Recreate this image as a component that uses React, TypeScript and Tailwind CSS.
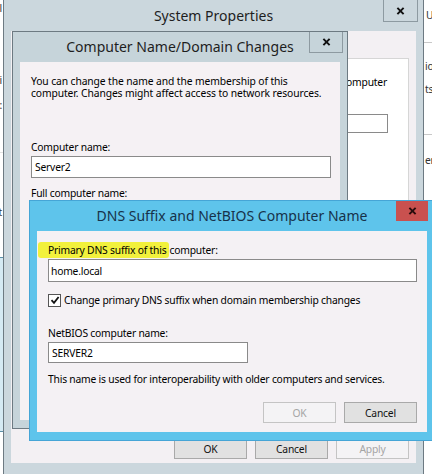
import React from 'react';

function CloseX() {
  return (
    <svg viewBox="0 0 10 9" className="h-[8px] w-[9px]">
      <path d="M1.5 1 L8.5 8 M8.5 1 L1.5 8" stroke="currentColor" strokeWidth="2.2" />
    </svg>
  );
}

function Button({ label, disabled }: { label: string; disabled?: boolean }) {
  return (
    <div
      className={
        disabled
          ? 'flex h-[21px] w-[73px] items-center justify-center border border-[#c4c4c4] bg-[#f4f3f5] text-[#a5a5a5]'
          : 'flex h-[21px] w-[73px] items-center justify-center border border-[#a9a9a9] bg-[#e1e1e1] text-[#111]'
      }
    >
      {label}
    </div>
  );
}

export default function App() {
  return (
    <div className="relative h-[474px] w-[432px] overflow-hidden bg-white font-[family-name:'Noto_Sans',sans-serif] text-[10.3px] leading-[14px] tracking-[-0.2px] text-black">
      {/* window behind, left edge */}
      <div className="absolute left-[-200px] top-[-1px] flex h-[480px] w-[204px] flex-col items-end border-r border-[#7b868c] bg-white text-[#333]">
        <div className="mt-[2px] pr-[1px]">Unl</div>
        <div className="mt-[58px] pr-[1px]">Edi</div>
        <div className="mt-[11px] pr-[1px]">Na:</div>
        <div className="mt-[40px] h-px w-full bg-[#e2e2e2]" />
        <div className="mt-[52px] pr-[1px]">Set</div>
        <div className="mt-[38px] h-[175px] w-full border-y border-[#5b8fa8] bg-[#d5eaf3]" />
      </div>

      {/* window behind, right edge */}
      <div className="absolute left-[424px] top-[-1px] flex h-[480px] w-[200px] flex-col bg-white text-[#333]">
        <div className="mt-[9px] pl-[2px]">User</div>
        <div className="mt-[20px] h-px w-full bg-[#c9c9c9]" />
        <div className="mt-[16px] pl-[1px]">ion</div>
        <div className="mt-[9px] pl-[1px]">ts</div>
        <div className="mt-[38px] h-px w-full bg-[#c9c9c9]" />
        <div className="mt-[18px] pl-[1px]">en</div>
      </div>

      {/* System Properties */}
      <div className="absolute left-[3px] top-[-1px] h-[480px] w-[421px] border border-[#6d7a82] bg-[#cbd7dd]">
        <div className="relative flex h-[31px] items-center justify-center text-[14px] tracking-normal text-[#1e1e1e]">
          System Properties
          <div className="absolute right-[5px] top-0 flex h-[22px] w-[35px] items-center justify-center border border-t-0 border-[#8d9aa1] text-[#111]">
            <CloseX />
          </div>
        </div>
        <div className="mx-[7px] flex h-[432px] flex-col bg-[#f3f0f3]">
          <div className="ml-[7px] mr-[7px] mt-[27px] flex h-[370px] flex-col border border-[#d6d6d6] bg-white">
            <div className="flex justify-end whitespace-nowrap pr-[21px] pt-[16px]">
              Windows uses the following information to identify your computer
            </div>
            <div className="pl-[12px]">on the network.</div>
            <div className="mt-[11px] flex justify-end pr-[20px]">
              <div className="h-[19px] w-[220px] border border-[#8a8a8a] bg-white" />
            </div>
          </div>
          <div className="mt-[10px] flex justify-end gap-[8px] pr-[7px]">
            <Button label="OK" />
            <Button label="Cancel" />
            <Button label="Apply" disabled />
          </div>
        </div>
      </div>

      {/* Computer Name/Domain Changes */}
      <div className="absolute left-[12px] top-[31px] h-[398px] w-[336px] border border-[#6d7a82] bg-[#c6d4da]">
        <div className="relative flex h-[30px] items-center justify-center text-[14px] tracking-normal text-[#1e1e1e]">
          Computer Name/Domain Changes
          <div className="absolute right-[4px] top-0 flex h-[21px] w-[34px] items-center justify-center border border-t-0 border-[#8d9aa1] text-[#111]">
            <CloseX />
          </div>
        </div>
        <div className="mx-[7px] flex h-[358px] flex-col bg-[#f5f1f4] pl-[11px] pt-[13px]">
          <p className="leading-[12px] tracking-[-0.1px]">
            You can change the name and the membership of this
            <br />
            computer. Changes might affect access to network resources.
          </p>
          <div className="mt-[41px]">Computer name:</div>
          <div className="mt-[2px] flex h-[22px] w-[300px] items-center border border-[#8a8a8a] bg-white pl-[3px]">
            Server2
          </div>
          <div className="mt-[8px]">Full computer name:</div>
        </div>
      </div>

      {/* DNS Suffix and NetBIOS Computer Name */}
      <div className="absolute left-[29px] top-[200px] h-[241px] w-[406px] border border-[#45a5d6] bg-[#5ec4eb]">
        <div className="relative flex h-[30px] items-center justify-center text-[14px] tracking-normal text-[#17324a]">
          DNS Suffix and NetBIOS Computer Name
          <div className="absolute right-[6px] top-0 flex h-[20px] w-[32px] items-center justify-center bg-[#c9514f] text-[#2a0d0d]">
            <CloseX />
          </div>
        </div>
        <div className="mx-[7px] flex h-[201px] flex-col bg-[#f4f1f4] pl-[11px] pr-[10px] pt-[12px]">
          <div className="whitespace-nowrap">
            <span className="-ml-[10px] rounded-[3px] bg-[#f2f13c] py-[1px] pl-[10px] pr-[3px]">
              Primary DNS suffix of this
            </span>
            computer:
          </div>
          <div className="mt-[2px] flex h-[23px] w-[369px] items-center border border-[#8a8a8a] bg-white pl-[2px]">
            home.local
          </div>
          <label className="mt-[11px] flex items-center gap-[3px]">
            <span className="flex h-[13px] w-[13px] items-center justify-center border border-[#555] bg-white">
              <svg viewBox="0 0 10 10" className="h-[10px] w-[10px]">
                <path d="M1.5 5.2 L4 7.8 L8.6 2" fill="none" stroke="#111" strokeWidth="1.8" />
              </svg>
            </span>
            Change primary DNS suffix when domain membership changes
          </label>
          <div className="mt-[19px]">NetBIOS computer name:</div>
          <div className="mt-[2px] flex h-[21px] w-[200px] items-center border border-[#8a8a8a] bg-white pl-[3px]">
            SERVER2
          </div>
          <div className="mt-[9px]">This name is used for interoperability with older computers and services.</div>
          <div className="mt-[16px] flex justify-end gap-[8px]">
            <Button label="OK" disabled />
            <Button label="Cancel" />
          </div>
        </div>
      </div>
    </div>
  );
}
